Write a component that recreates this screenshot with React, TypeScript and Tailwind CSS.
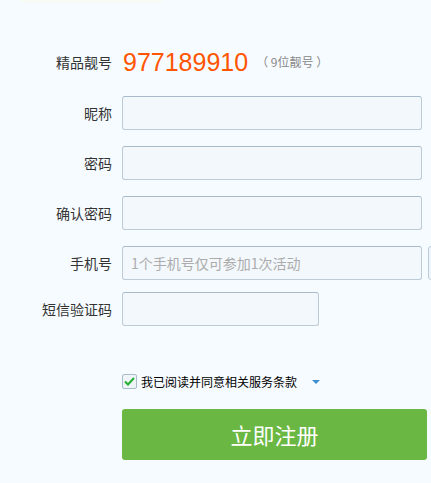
import React from 'react';

const cjk = { fontFamily: '"Noto Sans CJK SC", "Noto Sans", sans-serif' };

const Field: React.FC<{ label: string; width?: string; placeholder?: string; extra?: boolean; className?: string }> = ({
    label,
    width = 'w-[300px]',
    placeholder,
    extra,
    className = '',
}) => (
    <div className={`flex items-center h-[34px] ${className}`}>
        <div className="w-[112px] shrink-0 text-right text-[14px] text-[#333]">{label}</div>
        <input
            placeholder={placeholder}
            className={`${width} shrink-0 h-[34px] ml-[10px] px-[8px] rounded-[3px] border border-[#bccbd8] border-t-[#a9bacb] bg-[#f3f8fc] text-[14px] placeholder:text-[#acacac] outline-none`}
            style={cjk}
        />
        {extra && (
            <div className="w-[30px] shrink-0 h-[34px] ml-[6px] rounded-[3px] border border-[#bccbd8] bg-[#eef5fa]" />
        )}
    </div>
);

const App: React.FC = () => {
    return (
        <div className="w-[431px] h-[483px] overflow-hidden bg-[#f6fbff]" style={cjk}>
            {/* faint strip at top */}
            <div className="h-[2px] ml-[20px] w-[142px] bg-[#f8faf4]" />

            <div className="pt-[43px]">
                {/* 靓号 */}
                <div className="flex items-center h-[34px]">
                    <div className="w-[112px] shrink-0 text-right text-[14px] text-[#333]">精品靓号</div>
                    <span
                        className="ml-[11px] text-[25px] leading-none text-[#ff5500]"
                        style={{ fontFamily: '"Liberation Sans", Arial, sans-serif' }}
                    >
                        977189910
                    </span>
                    <span className="ml-[8px] text-[12px] text-[#888] whitespace-pre">（ 9位靓号 ）</span>
                </div>

                <Field label="昵称" className="mt-[17px]" />
                <Field label="密码" className="mt-[16px]" />
                <Field label="确认密码" className="mt-[16px]" />
                <Field label="手机号" className="mt-[16px]" placeholder="1个手机号仅可参加1次活动" extra />
                <Field label="短信验证码" width="w-[197px]" className="mt-[12px]" />

                {/* 协议 */}
                <div className="flex items-center h-[15px] mt-[48px] ml-[122px]">
                    <div className="w-[15px] h-[15px] rounded-[2px] border border-[#a9bccc] bg-[#eef4f8] flex items-center justify-center">
                        <svg width="11" height="9" viewBox="0 0 11 9">
                            <path d="M1 4.5 L4 7.5 L10 1" fill="none" stroke="#22b02e" strokeWidth="2" />
                        </svg>
                    </div>
                    <span className="ml-[4px] text-[12px] text-black leading-none">我已阅读并同意相关服务条款</span>
                    <svg className="ml-[15px] mt-[1px]" width="8" height="4" viewBox="0 0 8 4">
                        <path d="M0 0 H8 L4 4 Z" fill="#3d8fd0" />
                    </svg>
                </div>

                <button className="mt-[20px] ml-[122px] w-[305px] h-[51px] rounded-[3px] bg-[#6ab843] text-white text-[22px] flex items-center justify-center">
                    立即注册
                </button>
            </div>
        </div>
    );
};

export default App;
